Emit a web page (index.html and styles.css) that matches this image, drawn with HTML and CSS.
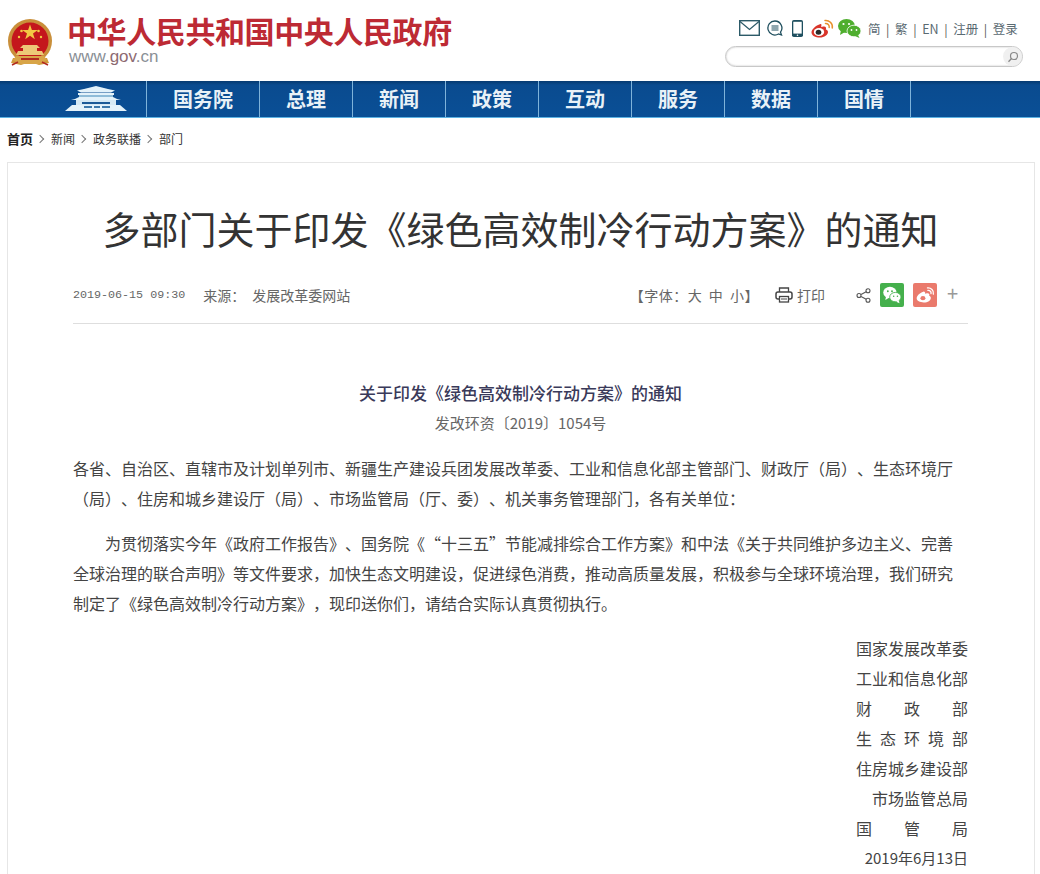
FILE: index.html
```html
<!DOCTYPE html>
<html lang="zh-CN">
<head>
<meta charset="utf-8">
<title>多部门关于印发《绿色高效制冷行动方案》的通知</title>
<link rel="stylesheet" href="styles.css">
</head>
<body>
<header class="top">
  <div class="brand">
    <svg class="emblem" viewBox="0 0 44 48" width="44" height="48">
      <path d="M5 39 L3 44 L13 46 L22 43 L31 46 L41 44 L39 39 Z" fill="#d09a3c"/>
      <circle cx="22" cy="22" r="22" fill="#c98f3a"/>
      <circle cx="22" cy="22" r="18.5" fill="#c4161c"/>
      <path d="M22 5.5 l1.9 5.6 5.9 0 -4.8 3.5 1.8 5.6 -4.8 -3.5 -4.8 3.5 1.8 -5.6 -4.8 -3.5 5.9 0z" fill="#f3c744"/>
      <circle cx="13.500" cy="12" r="1.300" fill="#f3c744"/>
      <circle cx="30.500" cy="12" r="1.300" fill="#f3c744"/>
      <circle cx="11" cy="18" r="1.200" fill="#f3c744"/>
      <circle cx="33" cy="18" r="1.200" fill="#f3c744"/>
      <path d="M15 26 h14 l3 3 h-3 v3 h5 l2 4 H8 l2 -4 h5 v-3 h-3z" fill="#edc877"/>
      <path d="M8 37 H36 L39 41 L31 45 H13 L5 41Z" fill="#d8a548"/>
      <path d="M13 40 H31" stroke="#b22a20" stroke-width="2"/>
      <path d="M10 43 L4 46 M34 43 L40 46" stroke="#b22a20" stroke-width="1.500"/>
    </svg>
    <div class="brand-text">
      <div class="brand-name">中华人民共和国中央人民政府</div>
      <div class="brand-url">www.<span class="brand-url-mark">gov</span>.cn</div>
    </div>
  </div>
  <div class="tools">
    <div class="tool-row">
      <svg class="icon-mail" viewBox="0 0 21 16" width="21" height="16"><rect x="0.700" y="0.700" width="19.600" height="14.600" fill="none" stroke="#2c5a68" stroke-width="1.400"/><path d="M1 1.500 L10.500 9.500 L20 1.500" fill="none" stroke="#2c5a68" stroke-width="1.200"/></svg>
      <svg class="icon-chat" viewBox="0 0 16 16" width="16" height="16"><path d="M8 1 a7 7 0 1 0 3.500 13 l3 1 -1 -2.800 A7 7 0 0 0 8 1z" fill="none" stroke="#1f4f5e" stroke-width="1.300"/><path d="M4.500 6 h7 M4.500 8 h7 M4.500 10 h7" stroke="#1f4f5e" stroke-width="1"/></svg>
      <svg class="icon-phone" viewBox="0 0 11 17" width="11" height="17"><rect x="0" y="0" width="11" height="17" rx="1.800" fill="#1f5060"/><rect x="1.300" y="1.800" width="8.400" height="11.800" fill="#fff"/><circle cx="5.500" cy="15.300" r="0.800" fill="#fff"/></svg>
      <svg class="icon-weibo" viewBox="0 0 23 19" width="23" height="19"><path d="M9.500 5 C4.500 6.500 0.500 10.500 0.500 13.500 C0.500 16.500 4.500 18.500 8.800 18.500 C13.500 18.500 17 15.800 17 13 C17 11.300 15.700 10.800 14.800 10.500 C15.500 8.800 15 7.500 13 7.400 C11.800 7.400 10.500 7.900 10.200 8 C10.500 6 10.800 4.800 9.500 5z" fill="#d9352a"/><ellipse cx="8" cy="13" rx="5.200" ry="4" fill="#fff"/><ellipse cx="7.500" cy="13.300" rx="2.800" ry="2.500" fill="#2a2a2a"/><path d="M14 1.500 C18 1 22 4 21.300 9 M14.500 4.500 C16.700 4.300 18.600 6 18.200 8.500" fill="none" stroke="#e8902c" stroke-width="1.500" stroke-linecap="round"/></svg>
      <svg class="icon-wechat" viewBox="0 0 23 19" width="23" height="19"><ellipse cx="8.500" cy="7" rx="8.500" ry="7" fill="#4fae2e"/><path d="M3 11 L2 16 L7 13z" fill="#4fae2e"/><ellipse cx="16" cy="12" rx="7" ry="5.800" fill="#4fae2e" stroke="#fff" stroke-width="0.800"/><path d="M20 16 L21.500 19 L17 17z" fill="#4fae2e"/><circle cx="5.500" cy="5" r="1.100" fill="#fff"/><circle cx="11" cy="5" r="1.100" fill="#fff"/><circle cx="13.500" cy="11" r="0.900" fill="#fff"/><circle cx="18.500" cy="11" r="0.900" fill="#fff"/></svg>
      <nav class="lang">
        <a>简</a><i>|</i><a>繁</a><i>|</i><a>EN</a><i>|</i><a>注册</a><i>|</i><a>登录</a>
      </nav>
    </div>
    <div class="search">
      <span class="search-btn">
        <svg viewBox="0 0 12 12" width="12" height="12"><circle cx="7" cy="5" r="3.500" fill="none" stroke="#888" stroke-width="1.200"/><path d="M4.500 7.500 L1.500 10.800" stroke="#888" stroke-width="1.300"/></svg>
      </span>
    </div>
  </div>
</header>

<nav class="mainnav">
  <div class="nav-logo">
    <svg viewBox="0 0 62 26" width="62" height="26">
      <path d="M31 0 L43 3 L50 4.500 L47 6 L46 6.500 H16 L15 6 L12 4.500 L19 3z" fill="#e3f2fa"/>
      <path d="M13 7 H49 V9 H13z" fill="#e3f2fa"/>
      <path d="M14 9 H48 V11 H14z" fill="#8fbcd8"/>
      <path d="M10 13 L14 11 H48 L52 13 L56 14 L6 14z" fill="#e3f2fa"/>
      <path d="M11 14 H51 V19 H11z" fill="#d5e9f4"/>
      <path d="M17 16 H45 V18 H17z" fill="#1a5a97"/>
      <path d="M7 19 H55 L62 25 H0z" fill="#e3f2fa"/>
      <path d="M19 20 H27 V22 H19z M29 20 H35 V22 H29z M37 20 H45 V22 H37z" fill="#3b78ab"/>
    </svg>
  </div>
  <a class="nav-item nav-item-wide">国务院</a>
  <a class="nav-item">总理</a>
  <a class="nav-item">新闻</a>
  <a class="nav-item">政策</a>
  <a class="nav-item">互动</a>
  <a class="nav-item">服务</a>
  <a class="nav-item">数据</a>
  <a class="nav-item">国情</a>
</nav>

<div class="crumbs">
  <b>首页</b><span class="sep"></span><a>新闻</a><span class="sep"></span><a>政务联播</a><span class="sep"></span><a>部门</a>
</div>

<main class="card">
  <h1 class="title">多部门关于印发《绿色高效制冷行动方案》的通知</h1>
  <div class="meta">
    <div class="meta-left">
      <span class="date">2019-06-15 09:30</span>
      <span class="source-label">来源：</span>
      <span class="source-name">发展改革委网站</span>
    </div>
    <div class="meta-right">
      <span class="fontsize">【字体：大 中 小】</span>
      <span class="print">
        <svg viewBox="0 0 18 16" width="18" height="16"><path d="M4.500 5 V1 H13.500 V5" fill="none" stroke="#444" stroke-width="1.300"/><rect x="1" y="5" width="16" height="7" rx="2" fill="none" stroke="#444" stroke-width="1.500"/><rect x="4.500" y="9.500" width="9" height="5.500" fill="#fff" stroke="#444" stroke-width="1.300"/><path d="M6 12 H12" stroke="#444"/></svg>
        打印
      </span>
      <svg class="share" viewBox="0 0 15 15" width="15" height="15"><circle cx="3" cy="7.500" r="2" fill="none" stroke="#555" stroke-width="1.100"/><circle cx="12" cy="2.800" r="2" fill="none" stroke="#555" stroke-width="1.100"/><circle cx="12" cy="12.200" r="2" fill="none" stroke="#555" stroke-width="1.100"/><path d="M5 6.500 L10.200 3.800 M5 8.500 L10.200 11.200" stroke="#555" stroke-width="1.100"/></svg>
      <span class="badge badge-green">
        <svg viewBox="0 0 24 24" width="20" height="20"><ellipse cx="9.500" cy="9" rx="8" ry="6.800" fill="#fff"/><path d="M5 13 L4 18 L9 15z" fill="#fff"/><ellipse cx="16" cy="14.500" rx="6.800" ry="5.600" fill="#fff" stroke="#45b04c" stroke-width="1"/><path d="M20 18 L21 22 L17 20z" fill="#fff"/><circle cx="7" cy="7.500" r="1.100" fill="#45b04c"/><circle cx="12" cy="7.500" r="1.100" fill="#45b04c"/><circle cx="14" cy="13.500" r="0.900" fill="#45b04c"/><circle cx="18.500" cy="13.500" r="0.900" fill="#45b04c"/></svg>
      </span>
      <span class="badge badge-red">
        <svg viewBox="0 0 24 24" width="20" height="20"><path d="M10 8 C5.500 9.500 2 13 2 16 C2 19 6 21 10.500 21 C15.500 21 19 18.300 19 15.500 C19 14 17.800 13.300 17 13 C17.600 11.300 17 10 15 10 C13.800 10 12.500 10.500 12.200 10.600 C12.500 8.800 11.500 7.600 10 8z" fill="#fff"/><ellipse cx="9.500" cy="15.800" rx="3" ry="2.500" fill="#ea7a6c"/><path d="M15 3.500 C19 3 23 6.500 22 11 M15.500 6.500 C17.800 6.300 19.800 8 19.200 10.300" fill="none" stroke="#fff" stroke-width="1.600" stroke-linecap="round"/></svg>
      </span>
      <span class="plus">+</span>
    </div>
  </div>

  <article class="body">
    <p class="doc-title">关于印发《绿色高效制冷行动方案》的通知</p>
    <p class="doc-no">发改环资〔2019〕1054号</p>
    <p class="para">各省、自治区、直辖市及计划单列市、新疆生产建设兵团发展改革委、工业和信息化部主管部门、财政厅（局）、生态环境厅（局）、住房和城乡建设厅（局）、市场监管局（厅、委）、机关事务管理部门，各有关单位：</p>
    <p class="para para-indent">为贯彻落实今年《政府工作报告》、国务院《“十三五”节能减排综合工作方案》和中法《关于共同维护多边主义、完善全球治理的联合声明》等文件要求，加快生态文明建设，促进绿色消费，推动高质量发展，积极参与全球环境治理，我们研究制定了《绿色高效制冷行动方案》，现印送你们，请结合实际认真贯彻执行。</p>
    <div class="sign">
      <div class="sign-row">国家发展改革委</div>
      <div class="sign-row">工业和信息化部</div>
      <div class="sign-row">财政部</div>
      <div class="sign-row">生态环境部</div>
      <div class="sign-row">住房城乡建设部</div>
      <div>市场监管总局</div>
      <div class="sign-row">国管局</div>
      <div class="sign-date">2019年6月13日</div>
    </div>
  </article>
</main>
</body>
</html>
```

FILE: styles.css
```css
* { box-sizing: border-box; }
html, body { margin: 0; padding: 0; }
html { overflow: hidden; }
body {
  width: 1040px;
  height: 874px;
  overflow: hidden;
  background: #fff;
  color: #333;
  font-family: "Noto Sans CJK SC", "Liberation Sans", sans-serif;
  text-spacing-trim: space-all;
}
p { margin: 0; }

.top {
  height: 81px;
  display: flex;
  justify-content: space-between;
  padding: 19px 17px 0 8px;
}
.brand { display: flex; align-items: flex-start; }
.emblem { flex: none; }
.brand-text { margin-left: 15px; }
.brand-name {
  margin-top: -1px;
  font-family: "Liberation Sans", "Noto Sans CJK SC", sans-serif;
  font-size: 30px;
  line-height: 30px;
  font-weight: 700;
  letter-spacing: -0.4px;
  color: #bd2a34;
  white-space: nowrap;
}
.brand-url {
  margin: -1px 0 0 2px;
  font-family: "Liberation Sans", sans-serif;
  font-size: 17px;
  line-height: 20px;
  color: #8a8f96;
}
.brand-url-mark { color: #8d6a72; }

.tools { width: 298px; }
.tool-row {
  display: flex;
  align-items: center;
  height: 20px;
  margin-top: -1px;
  padding-left: 14px;
}
.icon-chat { margin-left: 7px; }
.icon-phone { margin-left: 9px; }
.icon-weibo { margin-left: 8px; }
.icon-wechat { margin-left: 4px; }
.lang {
  margin-left: 7px;
  display: flex;
  align-items: center;
  font-size: 12.5px;
  color: #5a6a72;
  white-space: nowrap;
}
.lang i { font-style: normal; margin: 0 5.6px; color: #555; }
.search {
  margin-top: 8px;
  height: 21px;
  border: 1px solid #c8c8c8;
  box-shadow: inset 0 0 2px #bbb;
  border-radius: 11px;
  display: flex;
  justify-content: flex-end;
  align-items: center;
}
.search-btn {
  width: 19px;
  height: 19px;
  border-radius: 50%;
  background: #f0f0f0;
  display: flex;
  align-items: center;
  justify-content: center;
}

.mainnav {
  height: 37px;
  display: flex;
  background: linear-gradient(#063a70 0, #0a4b8f 4px, #0a4f96 100%);
  border-bottom: 1px solid #5cb3e4;
}
.nav-logo {
  width: 147px;
  padding: 5px 0 0 65px;
  border-right: 1px solid #7fb3da;
}
.nav-logo svg { display: block; }
.nav-item {
  width: 93px;
  border-right: 1px solid #7fb3da;
  color: #e9f1f7;
  font-size: 20px;
  font-weight: 700;
  line-height: 36px;
  text-align: center;
}
.nav-item-wide { width: 113px; }

.crumbs {
  height: 44px;
  padding: 12px 0 0 7px;
  display: flex;
  align-items: flex-start;
  font-size: 12px;
  line-height: 18px;
  color: #333;
}
.crumbs b { color: #222; font-size: 13px; }
.sep {
  width: 6px;
  height: 6px;
  margin: 6px 8px 0 4px;
  border-top: 1px solid #777;
  border-right: 1px solid #777;
  transform: rotate(45deg);
}

.card {
  width: 1028px;
  height: 712px;
  margin-left: 7px;
  border: 1px solid #e6e6e6;
  border-bottom: 0;
  padding: 0 66px 0 65px;
}
.title {
  margin: 39px 0 0;
  font-size: 38px;
  line-height: 52px;
  font-weight: 400;
  color: #333;
  text-align: center;
  white-space: nowrap;
}
.meta {
  margin-top: 28px;
  height: 42px;
  padding-bottom: 15px;
  border-bottom: 1px solid #dedede;
  display: flex;
  justify-content: space-between;
  align-items: center;
  font-size: 14px;
  color: #666;
}
.meta-left { display: flex; align-items: center; }
.date { font-family: "Liberation Mono", monospace; font-size: 11.7px; margin-right: 18px; }
.source-label { margin-right: 7px; }
.meta-right { display: flex; align-items: center; }
.fontsize { margin-right: 16px; letter-spacing: 0.5px; word-spacing: 3px; }
.print { display: flex; align-items: center; gap: 4px; margin-right: 31px; }
.print svg { flex: none; }
.share { margin-right: 9px; }
.badge {
  width: 24px;
  height: 24px;
  border-radius: 2px;
  display: flex;
  align-items: center;
  justify-content: center;
}
.badge-green { background: #45b04c; margin-right: 9px; }
.badge-red { background: #ea7a6c; margin-right: 10px; }
.plus { font-size: 20px; line-height: 20px; color: #999; width: 21px; margin-top: -4px; }

.body { color: #444; font-size: 16px; line-height: 30px; }
.doc-title {
  margin-top: 54px;
  font-size: 17px;
  text-align: center;
  font-weight: 500;
  color: #3a3a5a;
}
.doc-no { text-align: center; font-size: 15px; color: #666; }
.para { margin-top: 15px; }
.para-indent { text-indent: 32px; }
.sign {
  margin-top: 15px;
  display: flex;
  flex-direction: column;
  align-items: flex-end;
}
.sign-row {
  width: 112px;
  text-align: justify;
  text-align-last: justify;
  text-justify: inter-character;
}
.sign-date { font-size: 15px; }
```
